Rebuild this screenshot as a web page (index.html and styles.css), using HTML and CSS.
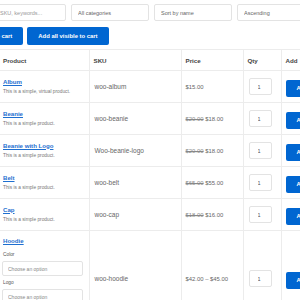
FILE: index.html
```html
<!DOCTYPE html>
<html lang="en">
  <head>
    <meta charset="UTF-8" />
    <meta name="viewport" content="width=device-width, initial-scale=1.0" />
    <title>Quick Order</title>
    <link rel="stylesheet" href="styles.css">
  </head>
  <body>
    <div class="page">
      <div class="filters">
        <input type="text" class="field field-search" placeholder="SKU, keywords..." />
        <select class="field"><option>All categories</option></select>
        <select class="field"><option>Sort by name</option></select>
        <select class="field"><option>Ascending</option></select>
      </div>

      <div class="actions">
        <button class="btn">Add selected to cart</button>
        <button class="btn">Add all visible to cart</button>
      </div>

      <table class="products">
        <colgroup>
          <col class="col-product" />
          <col class="col-sku" />
          <col class="col-price" />
          <col class="col-qty" />
          <col class="col-add" />
        </colgroup>
        <thead>
          <tr>
            <th>Product</th>
            <th>SKU</th>
            <th>Price</th>
            <th>Qty</th>
            <th>Add</th>
          </tr>
        </thead>
        <tbody>
          <tr>
            <td>
              <a href="#" class="name">Album</a>
              <div class="desc">This is a simple, virtual product.</div>
            </td>
            <td class="sku">woo-album</td>
            <td class="price">$15.00</td>
            <td><input type="text" class="qty" value="1" /></td>
            <td><button class="btn btn-add">Add</button></td>
          </tr>
          <tr>
            <td>
              <a href="#" class="name">Beanie</a>
              <div class="desc">This is a simple product.</div>
            </td>
            <td class="sku">woo-beanie</td>
            <td class="price"><del>$20.00</del> $18.00</td>
            <td><input type="text" class="qty" value="1" /></td>
            <td><button class="btn btn-add">Add</button></td>
          </tr>
          <tr>
            <td>
              <a href="#" class="name">Beanie with Logo</a>
              <div class="desc">This is a simple product.</div>
            </td>
            <td class="sku">Woo-beanie-logo</td>
            <td class="price"><del>$20.00</del> $18.00</td>
            <td><input type="text" class="qty" value="1" /></td>
            <td><button class="btn btn-add">Add</button></td>
          </tr>
          <tr>
            <td>
              <a href="#" class="name">Belt</a>
              <div class="desc">This is a simple product.</div>
            </td>
            <td class="sku">woo-belt</td>
            <td class="price"><del>$65.00</del> $55.00</td>
            <td><input type="text" class="qty" value="1" /></td>
            <td><button class="btn btn-add">Add</button></td>
          </tr>
          <tr>
            <td>
              <a href="#" class="name">Cap</a>
              <div class="desc">This is a simple product.</div>
            </td>
            <td class="sku">woo-cap</td>
            <td class="price"><del>$18.00</del> $16.00</td>
            <td><input type="text" class="qty" value="1" /></td>
            <td><button class="btn btn-add">Add</button></td>
          </tr>
          <tr class="variable">
            <td>
              <a href="#" class="name">Hoodie</a>
              <div class="option">
                <label>Color</label>
                <select class="choose"><option>Choose an option</option></select>
              </div>
              <div class="option">
                <label>Logo</label>
                <select class="choose"><option>Choose an option</option></select>
              </div>
            </td>
            <td class="sku">woo-hoodie</td>
            <td class="price">$42.00 &ndash; $45.00</td>
            <td><input type="text" class="qty" value="1" /></td>
            <td><button class="btn btn-add">Add</button></td>
          </tr>
        </tbody>
      </table>
    </div>
  </body>
</html>
```

FILE: styles.css
```css
* {
  margin: 0;
  padding: 0;
  box-sizing: border-box;
}

body {
  font-family: "Liberation Sans", Arial, sans-serif;
  background-color: #ffffff;
  color: #333;
  overflow: hidden;
}

.page {
  width: 360px;
  padding-top: 4px;
}

/* filter bar */
.filters {
  display: flex;
  gap: 5px;
  margin-left: -7px;
}

.field {
  width: 78px;
  height: 17px;
  padding: 0 6px;
  border: 1px solid #e3e3e3;
  border-radius: 2px;
  background-color: #fff;
  font-family: inherit;
  font-size: 5.5px;
  color: #666;
  appearance: none;
  outline: none;
}

.field-search {
  width: 73px;
}

.field::placeholder {
  color: #999;
}

/* bulk buttons */
.actions {
  display: flex;
  gap: 4px;
  margin: 6px 0 0 -55px;
}

.btn {
  background-color: #0066d1;
  color: #fff;
  border: none;
  border-radius: 2px;
  font-family: inherit;
  font-weight: bold;
  font-size: 5.9px;
  height: 18px;
  padding: 0 11px;
  white-space: nowrap;
  cursor: pointer;
}

/* product table */
.products {
  margin-top: 4px;
  margin-left: -1px;
  width: 360px;
  table-layout: fixed;
  border-collapse: collapse;
}

.col-product { width: 90px; }
.col-sku { width: 92px; }
.col-price { width: 62px; }
.col-qty { width: 38px; }
.col-add { width: 78px; }

.products th,
.products td {
  border: 1px solid #ececec;
  padding: 0 4px;
  text-align: left;
  vertical-align: middle;
}

.products th {
  height: 21px;
  font-size: 6.2px;
  font-weight: 600;
  color: #444;
}

.products td {
  height: 32px;
}

.products th:first-child,
.products td:first-child {
  border-left: none;
}

.name {
  display: block;
  font-size: 6.1px;
  font-weight: bold;
  color: #1e6fd0;
  text-decoration: underline;
}

.desc {
  margin-top: 4px;
  margin-bottom: 2px;
  font-size: 4.8px;
  color: #777;
}

.sku {
  padding-left: 5px !important;
  font-size: 6.5px;
  color: #666;
}

.price {
  font-size: 5.9px;
  color: #666;
}

.price del {
  color: #888;
}

.qty {
  display: block;
  margin-left: 1px;
  width: 23px;
  height: 17px;
  padding: 0 0 0 8px;
  border: 1px solid #e3e3e3;
  border-radius: 2px;
  font-family: inherit;
  font-size: 5.5px;
  color: #555;
}

.btn-add {
  height: 17px;
  width: 40px;
  text-align: left;
}

/* variable product */
.variable td {
  height: 96px;
}

.variable td:first-child {
  vertical-align: top;
  padding-top: 6px;
}

.option {
  margin-top: 8px;
}

.option + .option {
  margin-top: 4px;
}

.option label {
  display: block;
  font-size: 4.8px;
  color: #555;
  margin-bottom: 4px;
}

.choose {
  display: block;
  width: 81px;
  height: 15px;
  margin-left: -1px;
  padding: 0 5px;
  border: 1px solid #e3e3e3;
  border-radius: 2px;
  background-color: #fff;
  font-family: inherit;
  font-size: 5px;
  color: #888;
  appearance: none;
}
```
